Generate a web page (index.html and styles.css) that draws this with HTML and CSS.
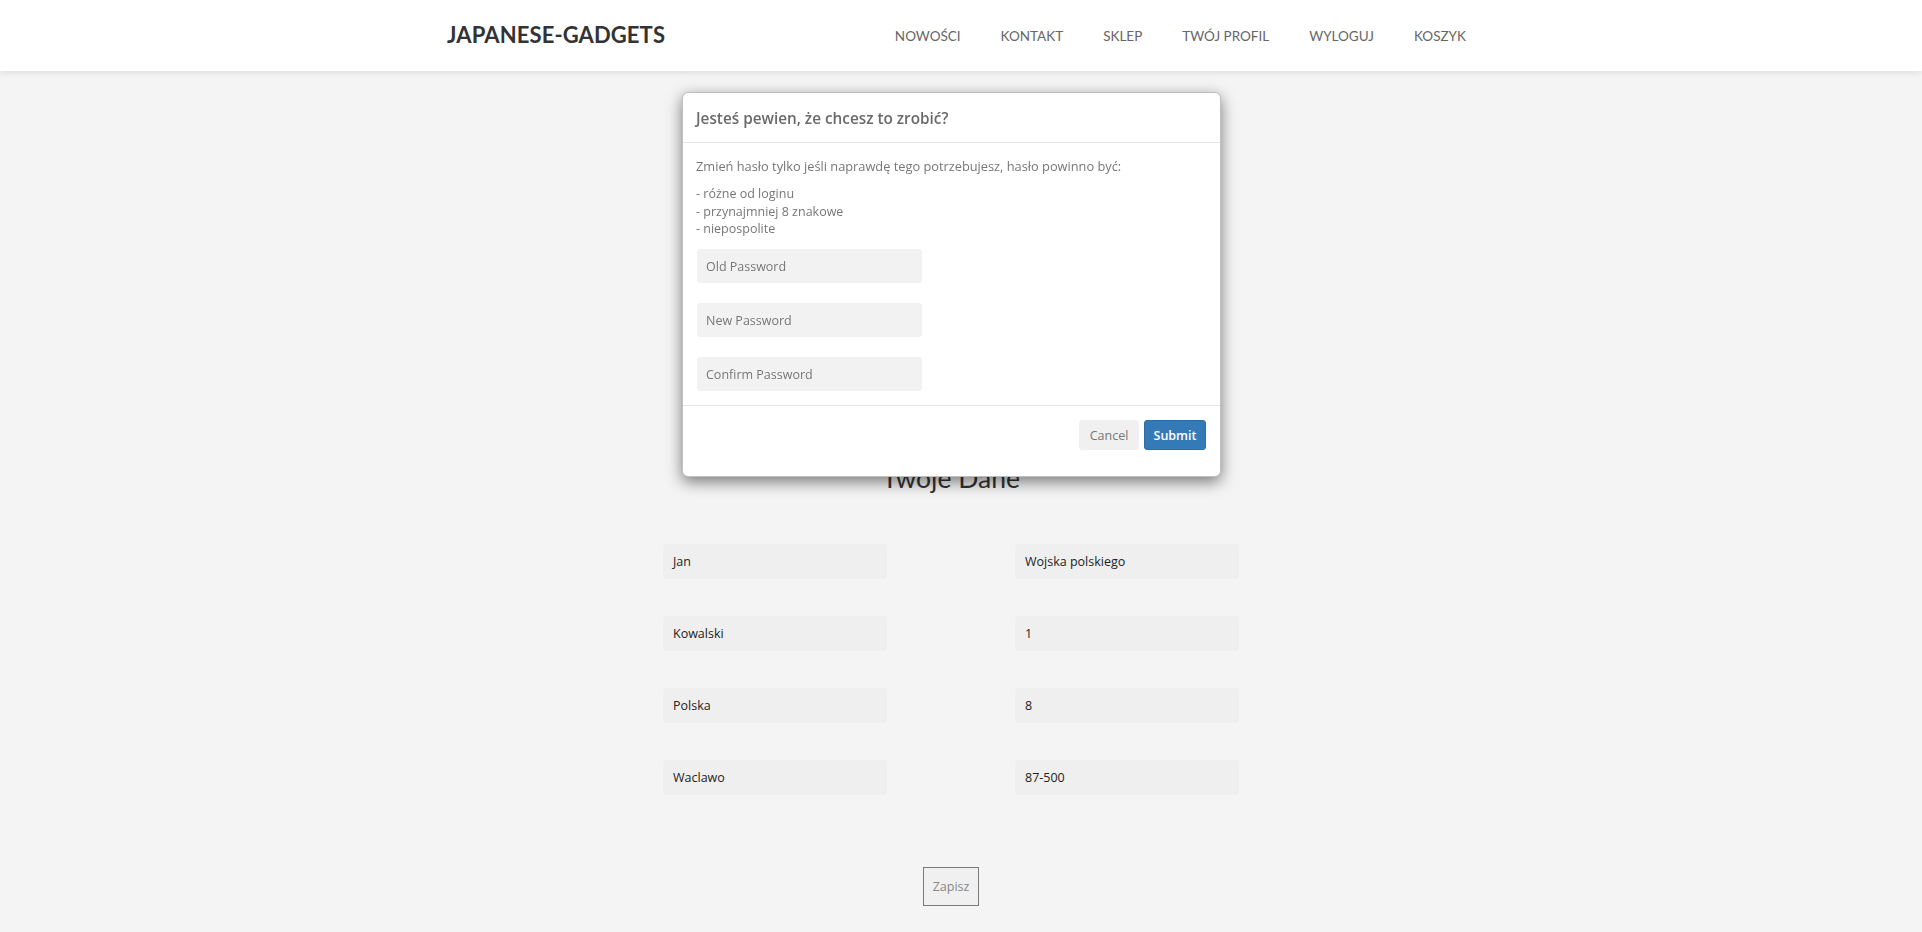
FILE: index.html
```html
<!DOCTYPE html>
<html lang="pl">
<head>
<meta charset="utf-8">
<title>Japanese-Gadgets</title>
<link rel="stylesheet" href="styles.css">
</head>
<body>
<header class="topbar">
  <a class="logo" href="#">JAPANESE-GADGETS</a>
  <nav class="menu">
    <a href="#">NOWOŚCI</a>
    <a href="#">KONTAKT</a>
    <a href="#">SKLEP</a>
    <a href="#">TWÓJ PROFIL</a>
    <a href="#">WYLOGUJ</a>
    <a href="#">KOSZYK</a>
  </nav>
</header>

<main class="page">
  <h2 class="page-title">Twoje Dane</h2>
  <form class="data-grid">
    <div class="field">Jan</div>
    <div class="field">Wojska polskiego</div>
    <div class="field">Kowalski</div>
    <div class="field">1</div>
    <div class="field">Polska</div>
    <div class="field">8</div>
    <div class="field">Waclawo</div>
    <div class="field">87-500</div>
  </form>
  <div class="save-row"><button class="save-btn" type="button">Zapisz</button></div>
</main>

<div class="modal-layer">
  <div class="modal">
    <div class="modal-header">
      <h4 class="modal-title">Jesteś pewien, że chcesz to zrobić?</h4>
    </div>
    <div class="modal-body">
      <p class="lead-text">Zmień hasło tylko jeśli naprawdę tego potrzebujesz, hasło powinno być:</p>
      <p class="rules">- różne od loginu<br>- przynajmniej 8 znakowe<br>- niepospolite</p>
      <input class="pw-input" type="password" placeholder="Old Password">
      <input class="pw-input" type="password" placeholder="New Password">
      <input class="pw-input" type="password" placeholder="Confirm Password">
    </div>
    <div class="modal-footer">
      <button class="btn btn-cancel" type="button">Cancel</button>
      <button class="btn btn-submit" type="button">Submit</button>
    </div>
  </div>
</div>
</body>
</html>
```
FILE: styles.css
```css
* { box-sizing: border-box; }

html, body { margin: 0; padding: 0; }

body {
  background: #f4f4f4;
  font-family: "Open Sans", "Noto Sans", "Liberation Sans", sans-serif;
  color: #333;
  padding-right: 17px;
  min-height: 932px;
}

.topbar {
  display: flex;
  align-items: center;
  height: 71px;
  background: #fff;
  box-shadow: 0 2px 6px rgba(0, 0, 0, 0.09);
  padding: 0 436px 0 447px;
  margin-right: -17px;
  position: relative;
  z-index: 2;
}

.logo {
  font-family: Lato, "Liberation Sans", sans-serif;
  font-weight: 700;
  font-size: 22px;
  color: #333;
  text-decoration: none;
  letter-spacing: 0.1px;
  margin-top: -3px;
}

.menu {
  margin-left: auto;
  display: flex;
}

.menu a {
  font-family: Lato, "Liberation Sans", sans-serif;
  font-size: 13.5px;
  color: #666;
  text-decoration: none;
  padding: 0 20px;
}

.page {
  display: flex;
  flex-direction: column;
  align-items: center;
  padding-top: 392px;
  padding-right: 3px;
}

.page-title {
  font-family: Lato, "Liberation Sans", sans-serif;
  font-weight: 400;
  font-size: 26.5px;
  color: #333;
  margin: 0;
  line-height: 30px;
}

.data-grid {
  display: grid;
  grid-template-columns: 224px 224px;
  column-gap: 128px;
  row-gap: 37px;
  margin-top: 51px;
}

.field {
  height: 35px;
  background: #efefef;
  border-radius: 3px;
  padding-left: 10px;
  font-size: 12.5px;
  line-height: 35px;
  color: #222;
}

.save-row {
  margin-top: 72px;
}

.save-btn {
  width: 56px;
  height: 39px;
  background: #f0f0f0;
  border: 1px solid #7a7a7a;
  color: #888;
  font-family: "Open Sans", "Noto Sans", sans-serif;
  font-size: 12.5px;
  padding: 0;
}

.modal-layer {
  position: fixed;
  top: 0;
  left: 0;
  right: 17px;
  display: flex;
  justify-content: center;
  padding-top: 92px;
  padding-right: 2px;
  z-index: 10;
}

.modal {
  width: 539px;
  height: 385px;
  background: #fff;
  border: 1px solid rgba(0, 0, 0, 0.25);
  border-radius: 6px;
  box-shadow: 0 5px 15px rgba(0, 0, 0, 0.5);
  display: flex;
  flex-direction: column;
}

.modal-header {
  height: 50px;
  border-bottom: 1px solid #e5e5e5;
  padding: 0 13px;
  display: flex;
  align-items: center;
}

.modal-title {
  margin: 0;
  font-size: 15.3px;
  font-weight: 600;
  color: #6a6a6a;
}

.modal-body {
  padding: 14px 14px 14px 14px;
  display: flex;
  flex-direction: column;
  align-items: flex-start;
  border-bottom: 1px solid #e5e5e5;
}

.lead-text {
  margin: 0 0 9px -1px;
  font-size: 12.8px;
  line-height: 19px;
  color: #777;
}

.rules {
  margin: 0 0 11px -1px;
  font-size: 12.5px;
  line-height: 17.7px;
  color: #777;
}

.pw-input {
  width: 225px;
  height: 34px;
  border: none;
  border-radius: 3px;
  background: #f2f2f2;
  padding: 0 9px;
  font-family: "Open Sans", "Noto Sans", sans-serif;
  font-size: 12.5px;
  color: #555;
  margin: 0 0 20px 0;
  outline: none;
}

.pw-input:last-child { margin-bottom: 0; }

.pw-input::placeholder { color: #777; }

.modal-footer {
  display: flex;
  justify-content: flex-end;
  gap: 5px;
  padding: 14px 14px 0;
}

.btn {
  height: 30px;
  border-radius: 3px;
  font-family: "Open Sans", "Noto Sans", sans-serif;
  font-size: 12.5px;
  padding: 0;
}

.btn-cancel {
  width: 60px;
  background: #f0f0f0;
  border: 1px solid #f0f0f0;
  color: #777;
}

.btn-submit {
  width: 62px;
  background: #337ab7;
  border: 1px solid #2e6da4;
  color: #fff;
  font-weight: 600;
}
```
